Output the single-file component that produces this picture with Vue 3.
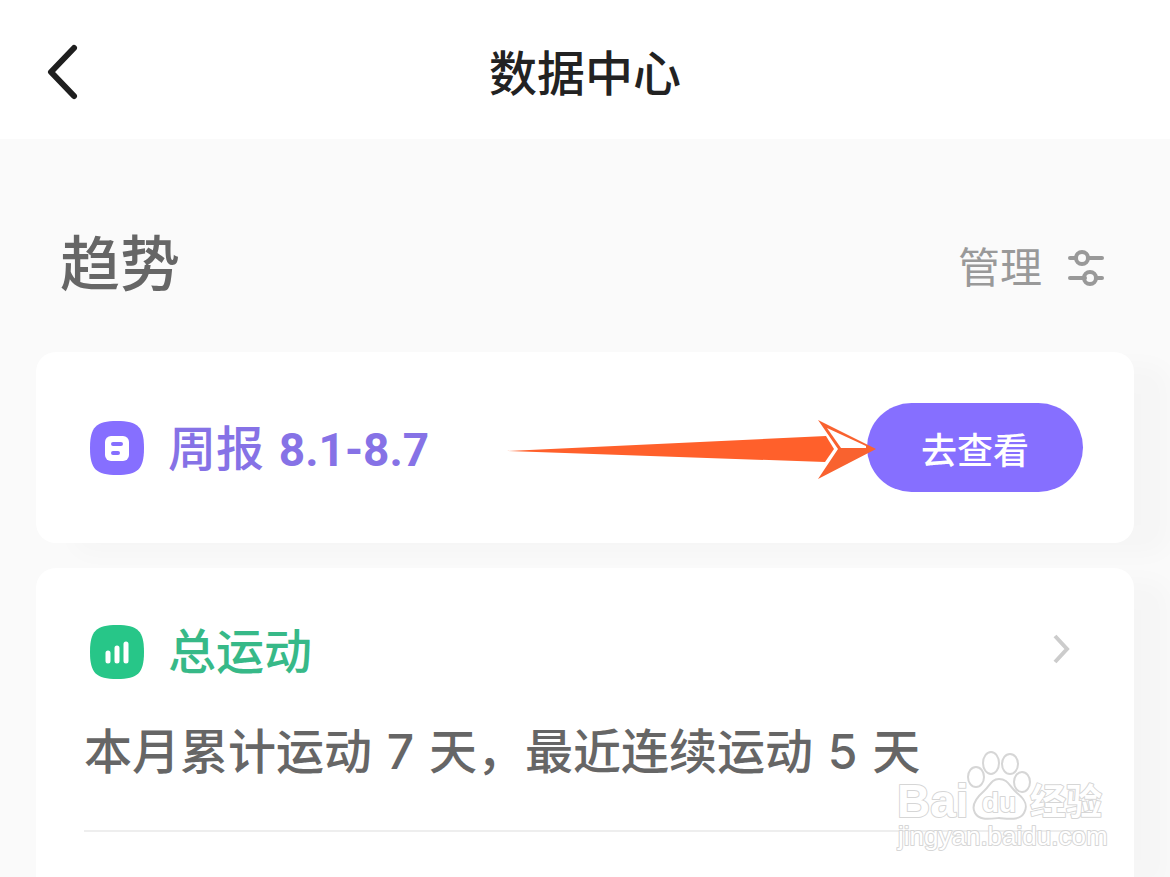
<template>
  <div class="page">
    <header class="navbar">
      <button class="back-btn" type="button" aria-label="返回" @click="goBack">
        <svg width="36" height="60" viewBox="0 0 36 60" fill="none">
          <path d="M30 7L7 31L30 55" stroke="#1f1f1f" stroke-width="6" stroke-linecap="round" stroke-linejoin="round" />
        </svg>
      </button>
      <h1>数据中心</h1>
    </header>

    <main class="content">
      <div class="section-head">
        <h2>趋势</h2>
        <button class="manage-btn" type="button">
          <span>管理</span>
          <svg width="38" height="40" viewBox="0 0 38 40" fill="none" stroke="#999" stroke-width="4" stroke-linecap="round">
            <path d="M2 10H8M20 10H34M2 30H17M29 30H34" />
            <circle cx="14" cy="10" r="6" />
            <circle cx="22" cy="30" r="6" />
          </svg>
        </button>
      </div>

      <section class="card report-card">
        <svg class="badge" viewBox="0 0 54 54">
          <path d="M27 0C48 0 54 6 54 27S48 54 27 54S0 48 0 27S6 0 27 0Z" fill="#866fff" />
          <rect x="15" y="15" width="24" height="25" rx="6" fill="#fff" />
          <path d="M23 23H31M23 32H28" stroke="#866fff" stroke-width="4" stroke-linecap="round" />
        </svg>
        <h3 class="report-title">周报 <span class="range">{{ range }}</span></h3>
        <div class="action">
          <button class="view-btn" type="button">去查看</button>
          <svg class="arrow" width="372" height="64" viewBox="0 0 372 64">
            <path d="M2 33L321 18L329 31L320 44Z" fill="#ff602b" />
            <path d="M313 2L371 31L313 61L333 31Z" fill="#f9622f" />
            <path d="M322 10L361 28V30H336Z" fill="#fff" />
          </svg>
        </div>
      </section>

      <section class="card sport-card">
        <a class="sport-head" href="#">
          <svg class="badge" viewBox="0 0 54 54">
            <path d="M27 0C48 0 54 6 54 27S48 54 27 54S0 48 0 27S6 0 27 0Z" fill="#27c688" />
            <path d="M18 28V36M27 23V36M36 19V36" stroke="#fff" stroke-width="5" stroke-linecap="round" />
          </svg>
          <h3>总运动</h3>
          <svg class="chevron" width="24" height="36" viewBox="0 0 24 36" fill="none">
            <path d="M6 5L18 18L6 31" stroke="#ccc" stroke-width="4" />
          </svg>
        </a>
        <p class="summary">
          本月累计运动 <span class="num">{{ monthDays }}</span> 天，最近连续运动 <span class="num">{{ streakDays }}</span> 天
        </p>

        <svg class="watermark" width="214" height="104" viewBox="0 0 214 104">
          <g class="outline">
            <ellipse cx="80" cy="27" rx="8" ry="10" />
            <ellipse cx="95" cy="13" rx="8" ry="11" />
            <ellipse cx="114" cy="14" rx="8" ry="10" />
            <ellipse cx="126" cy="32" rx="8" ry="10" />
            <path d="M103 29C112 29 113 36 121 43C130 50 132 56 128 63C124 70 116 69 103 68C91 69 83 70 79 63C75 56 80 48 88 41C94 36 95 29 103 29Z" />
          </g>
          <text class="logo" x="1" y="67">Bai</text>
          <text class="logo du" x="86" y="62">du</text>
          <text class="logo cjk" x="134" y="65">经验</text>
          <text class="logo site" x="2" y="95">jingyan.baidu.com</text>
        </svg>
      </section>
    </main>
  </div>
</template>

<script setup>
import { ref } from 'vue'

const range = ref('8.1-8.7')
const monthDays = ref(7)
const streakDays = ref(5)

function goBack() {
  window.history.back()
}
</script>

<style>
body {
  margin: 0;
  background: #fafafa;
}
</style>

<style scoped>
.page {
  display: flex;
  flex-direction: column;
  min-height: 100vh;
  overflow: hidden;
  font-family: Inter, "Noto Sans CJK SC", sans-serif;
  color: #666;
}

h1,
h2,
h3,
p {
  margin: 0;
  font-weight: 500;
}

button {
  padding: 0;
  border: none;
  background: none;
  font-family: inherit;
  cursor: pointer;
}

svg {
  display: block;
  flex-shrink: 0;
}

.navbar {
  display: grid;
  grid-template-columns: 1fr auto 1fr;
  align-items: center;
  height: 139px;
  padding: 8px 44px 0;
  box-sizing: border-box;
  background: #fff;
}

.back-btn {
  justify-self: start;
  padding-bottom: 6px;
}

.navbar h1 {
  font-size: 48px;
  line-height: 72px;
  color: #222;
}

.content {
  flex: 1;
  display: flex;
  flex-direction: column;
  padding: 0 36px;
}

.section-head {
  display: flex;
  align-items: center;
  justify-content: space-between;
  height: 213px;
  padding: 36px 28px 0 24px;
  box-sizing: border-box;
}

.section-head h2 {
  font-size: 60px;
  line-height: 88px;
}

.manage-btn {
  display: flex;
  align-items: center;
  gap: 26px;
  padding-top: 8px;
  font-size: 42px;
  line-height: 60px;
  color: #999;
}

.card {
  position: relative;
  background: #fff;
  border-radius: 20px;
  box-shadow: 36px 12px 24px rgba(0, 0, 0, 0.02);
}

.badge {
  width: 54px;
  height: 54px;
}

.report-card {
  display: flex;
  align-items: center;
  height: 191px;
  padding: 0 51px 0 54px;
}

.report-title {
  margin-left: 24px;
  padding-top: 4px;
  font-size: 48px;
  line-height: 72px;
  color: #8672e6;
}

.range {
  margin-left: 2px;
  font-family: Roboto, sans-serif;
  font-size: 46px;
  font-weight: 700;
}

.action {
  position: relative;
  margin-left: auto;
}

.view-btn {
  width: 216px;
  height: 89px;
  border-radius: 45px;
  background: #866fff;
  font-size: 36px;
  font-weight: 500;
  color: #fff;
}

.arrow {
  position: absolute;
  top: 15px;
  right: 206px;
  pointer-events: none;
}

.sport-card {
  flex: 1;
  margin-top: 25px;
  padding: 48px 50px 0 48px;
  border-radius: 20px 20px 0 0;
}

.sport-head {
  display: flex;
  align-items: center;
  height: 72px;
  padding: 0 11px 0 6px;
  text-decoration: none;
}

.sport-head h3 {
  margin-left: 24px;
  font-size: 48px;
  line-height: 72px;
  color: #37b988;
}

.chevron {
  margin-left: auto;
  padding-bottom: 6px;
}

.summary {
  padding: 28px 0 42px;
  border-bottom: 2px solid #eee;
  font-size: 48px;
  line-height: 72px;
  white-space: nowrap;
}

.num {
  margin: 0 2px;
}

.watermark {
  position: absolute;
  top: 182px;
  right: 24px;
  pointer-events: none;
}

.outline,
.logo {
  fill: #fff;
  stroke: #d6d6d6;
  stroke-width: 2px;
}

.logo {
  paint-order: stroke;
  stroke-linejoin: round;
  font-family: "Liberation Sans", sans-serif;
  font-size: 46px;
  font-weight: 700;
}

.du {
  font-size: 28px;
}

.cjk {
  font-family: "Noto Sans CJK SC", sans-serif;
  font-size: 36px;
}

.site {
  font-size: 26px;
  font-weight: 400;
}
</style>
